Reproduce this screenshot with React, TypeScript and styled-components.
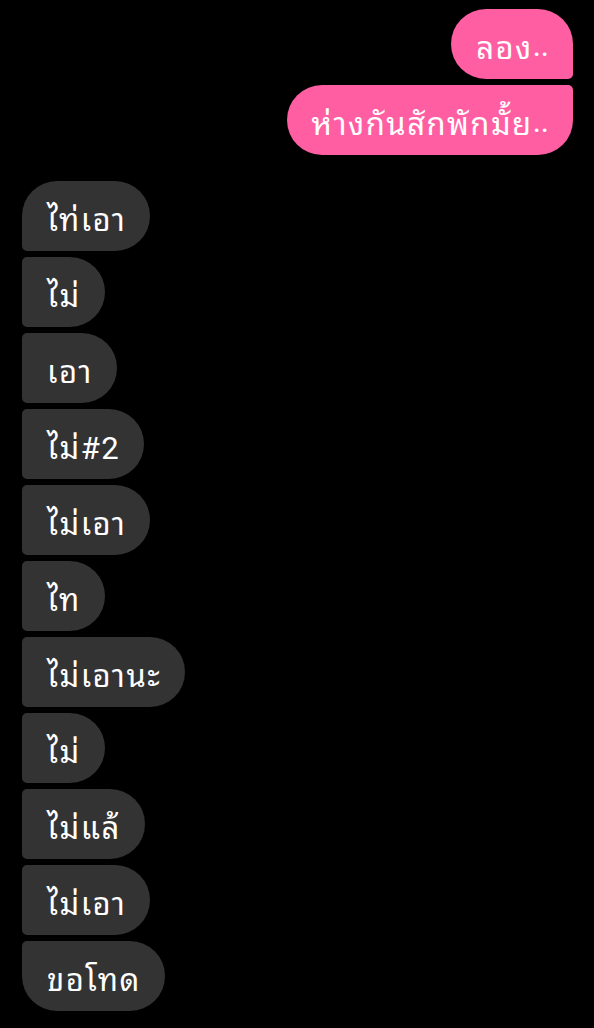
import React from "react";
import styled, { createGlobalStyle, css } from "styled-components";

const GlobalStyle = createGlobalStyle`
  html, body {
    margin: 0;
    padding: 0;
    background: #000;
  }
  body {
    font-family: Roboto, "Noto Sans Thai Looped", Loma, Garuda, "Noto Sans", sans-serif;
  }
`;

type Side = "me" | "them";
type Pos = "first" | "middle" | "last" | "single";

const outgoing = ["ลอง..", "ห่างกันสักพักมั้ย.."];
const incoming = [
  "ไท่เอา",
  "ไม่",
  "เอา",
  "ไม่#2",
  "ไม่เอา",
  "ไท",
  "ไม่เอานะ",
  "ไม่",
  "ไม่แล้",
  "ไม่เอา",
  "ขอโทด",
];

const Screen = styled.div`
  width: 594px;
  height: 1028px;
  overflow: hidden;
  background: #000;
  padding: 9px 21px 0 22px;
  box-sizing: border-box;
  display: flex;
  flex-direction: column;
  gap: 26px;
`;

const Group = styled.div<{ $side: Side }>`
  display: flex;
  flex-direction: column;
  gap: 6px;
  align-items: ${({ $side }) => ($side === "me" ? "flex-end" : "flex-start")};
`;

const BIG = 35;
const SMALL = 5;

const cornerFor = (side: Side, pos: Pos) => {
  const top = pos === "first" || pos === "single" ? BIG : SMALL;
  const bottom = pos === "last" || pos === "single" ? BIG : SMALL;
  if (side === "me") {
    return css`
      border-radius: ${BIG}px ${top}px ${bottom}px ${BIG}px;
    `;
  }
  return css`
    border-radius: ${top}px ${BIG}px ${BIG}px ${bottom}px;
  `;
};

const Bubble = styled.div<{ $side: Side; $pos: Pos }>`
  height: 70px;
  box-sizing: border-box;
  padding: 2px 24px 0 25px;
  display: flex;
  align-items: center;
  font-size: 31px;
  letter-spacing: 1.5px;
  color: #fff;
  white-space: nowrap;
  background: ${({ $side }) => ($side === "me" ? "#ff5fa2" : "#333333")};
  ${({ $side, $pos }) => cornerFor($side, $pos)}
`;

// trailing dots sit tight together, unlike the thai letters
const Dots = styled.span`
  letter-spacing: 0;
`;

const renderText = (t: string) => {
  const m = t.match(/^(.*?)(\.+)$/);
  if (!m) return t;
  return (
    <>
      {m[1]}
      <Dots>{m[2]}</Dots>
    </>
  );
};

const posOf = (i: number, n: number): Pos =>
  n === 1 ? "single" : i === 0 ? "first" : i === n - 1 ? "last" : "middle";

const App: React.FC = () => (
  <>
    <GlobalStyle />
    <Screen>
      <Group $side="me">
        {outgoing.map((t, i) => (
          <Bubble key={i} $side="me" $pos={posOf(i, outgoing.length)}>
            {renderText(t)}
          </Bubble>
        ))}
      </Group>
      <Group $side="them">
        {incoming.map((t, i) => (
          <Bubble key={i} $side="them" $pos={posOf(i, incoming.length)}>
            {renderText(t)}
          </Bubble>
        ))}
      </Group>
    </Screen>
  </>
);

export default App;
